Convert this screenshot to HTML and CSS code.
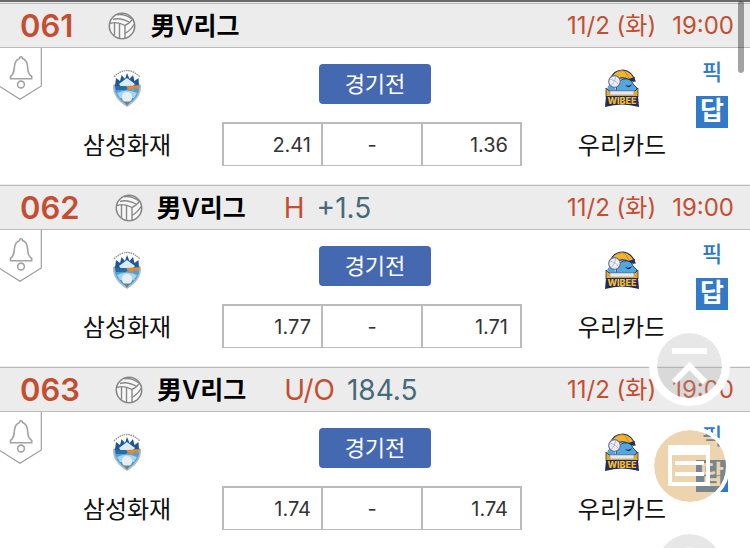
FILE: index.html
```html
<!DOCTYPE html>
<html lang="ko">
<head>
    <meta charset="UTF-8">
    <meta name="viewport" content="width=device-width, initial-scale=1.0">
    <title>男V리그</title>
    <link rel="stylesheet" href="styles.css">
</head>
<body>
    <svg class="sprite" aria-hidden="true">
        <symbol id="ball" viewBox="0 0 28 28">
            <circle cx="14" cy="14" r="12.7" fill="#f7f7f7" stroke="#888" stroke-width="1.6"/>
            <g fill="none" stroke="#888" stroke-width="1.4">
                <path d="M2 11.500Q9 9 17 13.500V26"/>
                <path d="M5 7.500Q12 5 22 10.500M9 2.700Q17 1.500 24 7"/>
                <path d="M17 13.500Q22 11.500 24.500 7M17 21.500Q23 18 26.300 12"/>
                <path d="M6.500 11V23.500M11.500 11.500V26"/>
            </g>
        </symbol>
        <symbol id="bell" viewBox="0 0 42 52">
            <path d="M-1 38L20 51.300L41.300 38V-1" fill="#fff" stroke="#999" stroke-width="1.1"/>
            <g fill="none" stroke="#a3a3a3" stroke-width="1.600">
                <path d="M10.500 30.700V28.500C14 26 14 23 14.500 18C15 13 17 11.500 19.500 10.500Q19.500 8.700 21 8.700T22.500 10.500C25.500 11.500 27 13.500 27.500 18C28 23 28 26 31.700 28.500V30.700Z"/>
                <circle cx="21" cy="36.500" r="3.400"/>
            </g>
        </symbol>
        <symbol id="samsung" viewBox="0 0 36 40">
            <path d="M5 9Q18-4 31 9" fill="none" stroke="#999" stroke-width="1.400" stroke-dasharray="1.600 .7"/>
            <path d="M4 17Q18 9 32 17Q33 30 18 39Q3 30 4 17Z" fill="#b3bcc2"/>
            <path d="M5.500 17Q18 12 30.500 17Q31 29 18 37Q5 29 5.500 17Z" fill="#4ba0d8"/>
            <path d="M6 18L7 10L11 13L12.500 7L16 11L18 5L20.500 11L24 7L25.500 13L29.500 10L30 18Z" fill="#1f5798"/>
            <path d="M10 16L18 10L26 16L22 20H13Z" fill="#d9edf8"/>
            <path d="M6 18H20L17 22H7Z" fill="#286ba8"/>
            <path d="M17 18L31 17L29 21L25 20L24 23L19 21Z" fill="#d98b3c"/>
            <path d="M8 25Q18 20 28 25L25 30H11Z" fill="#a4d5f3"/>
            <circle cx="18" cy="29" r="5.200" fill="#e9eef1"/>
            <path d="M15 33.500L18 38L21 33.500Z" fill="#777f86"/>
        </symbol>
        <symbol id="woori" viewBox="0 0 36 40">
            <path d="M6 12Q9 2 19 2Q28 3 31 13L25 12Q18 7 8 14Z" fill="#f0b52c" stroke="#24305f" stroke-width="1.200"/>
            <path d="M14 4Q19 1 22 5L26 12" fill="none" stroke="#c98b1d"/>
            <path d="M12 24Q12 12 20 11Q27 10 29 16L33 20L31 25Z" fill="#50a8df" stroke="#24457b"/>
            <path d="M3 23Q3 16 8 16L14 25Z" fill="#50a8df"/>
            <path d="M24 11L31 9L30 14L27 13Z" fill="#24305f"/>
            <path d="M21 17Q25 19 28 16Q26 22 21 17Z" fill="#182142"/>
            <circle cx="10.500" cy="13.500" r="5.800" fill="#eceef4" stroke="#6e7391" stroke-width="1.200"/>
            <path d="M6 11Q12 12 15 17M12 8Q11 14 7 18" fill="none" stroke="#a8acc3" stroke-width=".8"/>
            <path d="M2 20L5 23H31L34 20V29H2Z" fill="#eaa924" stroke="#24305f" stroke-width=".8"/>
            <path d="M6 23H30V27H6Z" fill="#e5e8ec" stroke="#969db0" stroke-width=".7"/>
            <path d="M2 28H34L35 39Q18 34 1 39Z" fill="#202b5c"/>
            <text class="logo-text" x="18" y="36" text-anchor="middle">WIBEE</text>
        </symbol>
    </svg>

    <main class="games">
        <section class="game">
            <header class="game-head">
                <span class="number">061</span>
                <svg class="ball"><use href="#ball"/></svg>
                <h2 class="league">男V리그</h2>
                <span class="date">11/2 (화)</span>
                <span class="time">19:00</span>
            </header>
            <div class="game-body">
                <button class="alarm" aria-label="알림"><svg><use href="#bell"/></svg></button>
                <div class="team"><svg><use href="#samsung"/></svg><span>삼성화재</span></div>
                <div class="match">
                    <button class="state">경기전</button>
                    <div class="odds">
                        <button>2.41</button>
                        <button class="draw">-</button>
                        <button>1.36</button>
                    </div>
                </div>
                <div class="team"><svg><use href="#woori"/></svg><span>우리카드</span></div>
                <div class="links"><a class="pick" href="#">픽</a><a class="answer" href="#">답</a></div>
            </div>
        </section>

        <section class="game">
            <header class="game-head">
                <span class="number">062</span>
                <svg class="ball"><use href="#ball"/></svg>
                <h2 class="league">男V리그</h2>
                <span class="type">H</span>
                <span class="line">+1.5</span>
                <span class="date">11/2 (화)</span>
                <span class="time">19:00</span>
            </header>
            <div class="game-body">
                <button class="alarm" aria-label="알림"><svg><use href="#bell"/></svg></button>
                <div class="team"><svg><use href="#samsung"/></svg><span>삼성화재</span></div>
                <div class="match">
                    <button class="state">경기전</button>
                    <div class="odds">
                        <button>1.77</button>
                        <button class="draw">-</button>
                        <button>1.71</button>
                    </div>
                </div>
                <div class="team"><svg><use href="#woori"/></svg><span>우리카드</span></div>
                <div class="links"><a class="pick" href="#">픽</a><a class="answer" href="#">답</a></div>
            </div>
        </section>

        <section class="game">
            <header class="game-head">
                <span class="number">063</span>
                <svg class="ball"><use href="#ball"/></svg>
                <h2 class="league">男V리그</h2>
                <span class="type">U/O</span>
                <span class="line">184.5</span>
                <span class="date">11/2 (화)</span>
                <span class="time">19:00</span>
            </header>
            <div class="game-body">
                <button class="alarm" aria-label="알림"><svg><use href="#bell"/></svg></button>
                <div class="team"><svg><use href="#samsung"/></svg><span>삼성화재</span></div>
                <div class="match">
                    <button class="state">경기전</button>
                    <div class="odds">
                        <button>1.74</button>
                        <button class="draw">-</button>
                        <button>1.74</button>
                    </div>
                </div>
                <div class="team"><svg><use href="#woori"/></svg><span>우리카드</span></div>
                <div class="links"><a class="pick" href="#">픽</a><a class="answer" href="#">답</a></div>
            </div>
        </section>
    </main>

    <nav class="floating">
        <button class="round" aria-label="맨 위로">
            <svg viewBox="0 0 65 65" fill="none" stroke="#fff" stroke-width="6"><path d="M15 18H50M17 49L32.500 33L48 49"/></svg>
        </button>
        <button class="round list" aria-label="목록">
            <svg viewBox="0 0 72 72" fill="none" stroke="#fff" stroke-width="4"><path d="M16 17H54V54H16ZM21 33H50M21 44H50"/><path d="M14 20H56" stroke-width="10"/></svg>
        </button>
        <button class="round" aria-label="새로고침">
            <svg viewBox="0 0 65 65" fill="none" stroke="#fff" stroke-width="6"><circle cx="32.500" cy="32.500" r="16"/></svg>
        </button>
    </nav>
    <div class="scroll-thumb"></div>
</body>
</html>
```
FILE: styles.css
```css
* {
    box-sizing: border-box;
}
html {
    scrollbar-width: none;
}
body {
    margin: 0;
    background: #fff;
    color: #111;
    font-family: Inter, "Noto Sans CJK KR", sans-serif;
}
button {
    padding: 0;
    border: 0;
    background: none;
    font-family: inherit;
    cursor: pointer;
}
a {
    text-decoration: none;
}
.sprite {
    display: none;
}
.logo-text {
    fill: #f5bd2b;
    font-size: 9px;
    font-weight: 800;
}
.games {
    border-top: 2px solid #6b6b6b;
}
.game {
    border-top: 1px solid #ececec;
}
.game-head {
    display: flex;
    align-items: center;
    height: 45px;
    padding: 0 16px 0 20px;
    border-top: 1px solid #bbb;
    border-bottom: 1px solid #bbb;
    background: #ececec;
    color: #c34f33;
    line-height: 40px;
    white-space: nowrap;
}
.number {
    font-size: 31px;
    font-weight: 600;
}
.ball {
    width: 28px;
    height: 28px;
    margin: 0 14px 0 35px;
}
.league {
    margin: 0 38px 0 0;
    color: #000;
    font-size: 25px;
    font-weight: 600;
}
.type,
.line {
    font-size: 28px;
    font-weight: 400;
}
.type {
    margin-right: 12px;
}
.line {
    color: #456a7c;
}
.date,
.time {
    font-size: 24px;
}
.date {
    margin-left: auto;
}
.time {
    margin-left: 16px;
}
.game-body {
    display: grid;
    grid-template-columns: 42px 170fr 342px 136fr 60px;
    height: 136px;
}
.alarm,
.alarm svg {
    display: block;
    width: 42px;
    height: 52px;
}
.team {
    display: flex;
    flex-direction: column;
    align-items: center;
    gap: 20px;
    padding-top: 20px;
    font-size: 24px;
    line-height: 36px;
    white-space: nowrap;
}
.team svg {
    width: 36px;
    height: 40px;
}
.match {
    display: flex;
    flex-direction: column;
    align-items: center;
    gap: 18px;
    padding: 16px 26px 0 10px;
}
.state {
    width: 112px;
    height: 40px;
    border-radius: 4px;
    background: #4569b1;
    color: #fff;
    font-size: 22px;
    line-height: 36px;
}
.odds {
    display: grid;
    grid-template-columns: 1fr 98px 1fr;
    align-self: flex-start;
    width: 300px;
    height: 44px;
    border: 2px solid #bbb;
    border-bottom-width: 1px;
}
.odds button {
    padding-right: 12px;
    color: #333;
    font-size: 20px;
    text-align: right;
}
.odds .draw {
    padding: 0;
    border: solid #bbb;
    border-width: 0 2px;
    text-align: center;
}
.odds .draw {
    width: 102px;
    justify-self: center;
}
.links {
    display: flex;
    flex-direction: column;
    align-items: center;
    gap: 8px;
    padding: 8px 16px 0 0;
}
.pick {
    color: #3279c7;
    font-size: 22px;
    font-weight: 500;
    line-height: 32px;
}
.answer {
    width: 32px;
    height: 32px;
    background: #3279c7;
    color: #fff;
    font-size: 26px;
    font-weight: 700;
    line-height: 30px;
    text-align: center;
}
.floating {
    position: fixed;
    top: 325px;
    right: 20px;
    display: flex;
    flex-direction: column;
    align-items: center;
    gap: 20px;
}
.round {
    width: 81px;
    height: 81px;
    border: 8px solid #fff;
    border-radius: 50%;
    background: rgba(170, 170, 170, 0.28);
    background-clip: padding-box;
}
.round svg {
    display: block;
    width: 100%;
    height: 100%;
}
.round.list {
    width: 80px;
    height: 80px;
    border-width: 4px;
    background-color: rgba(214, 153, 67, 0.43);
}
.scroll-thumb {
    position: fixed;
    top: 1px;
    right: 6px;
    width: 6px;
    height: 72px;
    border-radius: 3px;
    background: rgba(0, 0, 0, 0.36);
}
```
